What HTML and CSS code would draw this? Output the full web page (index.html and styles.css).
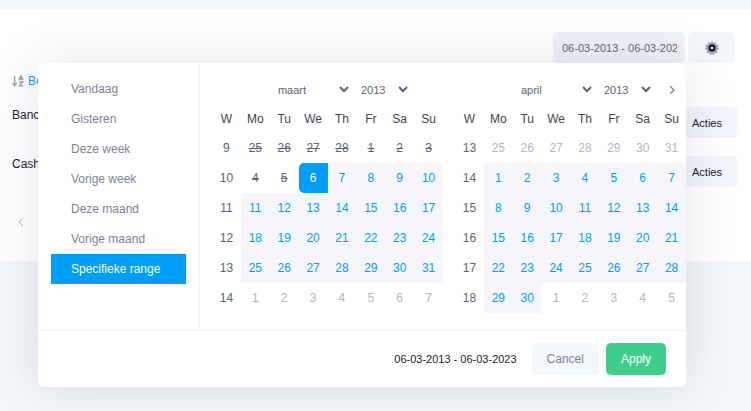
FILE: index.html
```html
<!DOCTYPE html>
<html lang="nl">
<head>
    <meta charset="UTF-8">
    <meta name="viewport" content="width=device-width, initial-scale=1.0">
    <title>Betaald</title>
    <link rel="stylesheet" href="styles.css">
</head>
<body>
    <main class="card">
        <div class="toolbar">
            <input class="range-input" type="text" aria-label="Periode" value="06-03-2013 - 06-03-2023">
            <button class="settings" type="button" aria-label="Instellingen">
                <svg width="16" height="16" viewBox="0 0 16 16">
                    <path fill="#a9adbf" d="M8 0.8l1.6 1.9 2.4-.8.4 2.5 2.4.6-.9 2.3 1.3 1.7-2 1.4.3 2.4-2.5.2-1 2.2L8 14l-2 1.2-1-2.2-2.5-.2.3-2.4-2-1.4 1.3-1.7-.9-2.3 2.4-.6.4-2.5 2.4.8z"/>
                    <circle cx="8" cy="8" r="2.5" fill="#fff" stroke="#181c32" stroke-width="2.4"/>
                </svg>
            </button>
        </div>
        <table class="list">
            <thead>
                <tr>
                    <th>
                        <a class="sort" href="#">
                            <svg width="12" height="12" viewBox="0 0 12 12" fill="none" stroke="#9a9db4" stroke-width="1.3">
                                <path d="M2.7 1v9.5M.5 8l2.2 2.7L5 8M6.8 5.3L9 .8l2.2 4.5M7.5 4h3M7 7h3.8l-3.6 3.8h4"/>
                            </svg>
                            Betaald
                        </a>
                    </th>
                    <th></th>
                </tr>
            </thead>
            <tbody>
                <tr>
                    <td>Bancontact</td>
                    <td class="actions"><button type="button">Acties</button></td>
                </tr>
                <tr>
                    <td>Cash</td>
                    <td class="actions"><button type="button">Acties</button></td>
                </tr>
            </tbody>
        </table>
        <div class="pager">
            <a href="#" aria-label="Vorige">
                <svg width="8" height="10" viewBox="0 0 8 10" fill="none" stroke="#b5b5c3"><path d="M6 1L2 5l4 4"/></svg>
            </a>
        </div>
    </main>

    <div class="picker">
        <div class="picker-main">
            <div class="ranges">
                <button type="button">Vandaag</button>
                <button type="button">Gisteren</button>
                <button type="button">Deze week</button>
                <button type="button">Vorige week</button>
                <button type="button">Deze maand</button>
                <button type="button">Vorige maand</button>
                <button type="button" class="active">Specifieke range</button>
            </div>
            <div class="calendars">
                <table class="calendar">
                    <thead>
                        <tr>
                            <th></th>
                            <th></th>
                            <th colspan="5">
                                <div class="selects">
                                    <select class="month" aria-label="Maand"><option>maart</option></select>
                                    <select class="year" aria-label="Jaar"><option>2013</option></select>
                                </div>
                            </th>
                            <th></th>
                        </tr>
                        <tr><th>W</th><th>Mo</th><th>Tu</th><th>We</th><th>Th</th><th>Fr</th><th>Sa</th><th>Su</th></tr>
                    </thead>
                    <tbody>
                        <tr><td>9</td><td class="disabled">25</td><td class="disabled">26</td><td class="disabled">27</td><td class="disabled">28</td><td class="disabled">1</td><td class="disabled">2</td><td class="disabled">3</td></tr>
                        <tr><td>10</td><td class="disabled">4</td><td class="disabled">5</td><td class="start">6</td><td class="in">7</td><td class="in">8</td><td class="in">9</td><td class="in">10</td></tr>
                        <tr><td>11</td><td class="in">11</td><td class="in">12</td><td class="in">13</td><td class="in">14</td><td class="in">15</td><td class="in">16</td><td class="in">17</td></tr>
                        <tr><td>12</td><td class="in">18</td><td class="in">19</td><td class="in">20</td><td class="in">21</td><td class="in">22</td><td class="in">23</td><td class="in">24</td></tr>
                        <tr><td>13</td><td class="in">25</td><td class="in">26</td><td class="in">27</td><td class="in">28</td><td class="in">29</td><td class="in">30</td><td class="in">31</td></tr>
                        <tr><td>14</td><td class="off">1</td><td class="off">2</td><td class="off">3</td><td class="off">4</td><td class="off">5</td><td class="off">6</td><td class="off">7</td></tr>
                    </tbody>
                </table>
                <table class="calendar">
                    <thead>
                        <tr>
                            <th></th>
                            <th></th>
                            <th colspan="5">
                                <div class="selects">
                                    <select class="month" aria-label="Maand"><option>april</option></select>
                                    <select class="year" aria-label="Jaar"><option>2013</option></select>
                                </div>
                            </th>
                            <th>
                                <button class="next" type="button" aria-label="Volgende">
                                    <svg width="8" height="10" viewBox="0 0 8 10" fill="none" stroke="#7e8299" stroke-width="1.2"><path d="M2 1l4 4-4 4"/></svg>
                                </button>
                            </th>
                        </tr>
                        <tr><th>W</th><th>Mo</th><th>Tu</th><th>We</th><th>Th</th><th>Fr</th><th>Sa</th><th>Su</th></tr>
                    </thead>
                    <tbody>
                        <tr><td>13</td><td class="off">25</td><td class="off">26</td><td class="off">27</td><td class="off">28</td><td class="off">29</td><td class="off">30</td><td class="off">31</td></tr>
                        <tr><td>14</td><td class="in">1</td><td class="in">2</td><td class="in">3</td><td class="in">4</td><td class="in">5</td><td class="in">6</td><td class="in">7</td></tr>
                        <tr><td>15</td><td class="in">8</td><td class="in">9</td><td class="in">10</td><td class="in">11</td><td class="in">12</td><td class="in">13</td><td class="in">14</td></tr>
                        <tr><td>16</td><td class="in">15</td><td class="in">16</td><td class="in">17</td><td class="in">18</td><td class="in">19</td><td class="in">20</td><td class="in">21</td></tr>
                        <tr><td>17</td><td class="in">22</td><td class="in">23</td><td class="in">24</td><td class="in">25</td><td class="in">26</td><td class="in">27</td><td class="in">28</td></tr>
                        <tr><td>18</td><td class="in">29</td><td class="in">30</td><td class="off">1</td><td class="off">2</td><td class="off">3</td><td class="off">4</td><td class="off">5</td></tr>
                    </tbody>
                </table>
            </div>
        </div>
        <div class="picker-footer">
            <span class="selected">06-03-2013 - 06-03-2023</span>
            <button class="cancel" type="button">Cancel</button>
            <button class="apply" type="button">Apply</button>
        </div>
    </div>
</body>
</html>
```

FILE: styles.css
```css
* {
    box-sizing: border-box;
}
body {
    margin: 0;
    padding-top: 9px;
    min-height: 100vh;
    background: #f2f7fa;
    color: #181c32;
    font-family: Helvetica, "Liberation Sans", Arial, sans-serif;
    font-size: 12px;
    line-height: 16px;
}
button, input, select {
    font: inherit;
    border: none;
    margin: 0;
}
button {
    cursor: pointer;
}
a {
    color: #009ef7;
    text-decoration: none;
}
svg {
    display: block;
}

/* Page behind the picker */
.card {
    background: #fff;
    padding: 23px 13px 0 12px;
}
.toolbar {
    display: flex;
    justify-content: flex-end;
    gap: 3px;
    padding-right: 3px;
}
.range-input {
    width: 132px;
    height: 31px;
    padding: 0 8px 0 9px;
    border-radius: 5px;
    background: #eef2f7;
    color: #5e6278;
    font-size: 11px;
}
.settings {
    display: flex;
    align-items: center;
    justify-content: center;
    width: 47px;
    height: 31px;
    border-radius: 5px;
    background: #f2f6fa;
}
.list {
    width: 100%;
    border-collapse: collapse;
}
.list th {
    height: 35px;
    padding: 0;
    font-weight: normal;
    text-align: left;
}
.list td {
    padding: 9px 0;
    vertical-align: top;
}
.sort {
    display: flex;
    align-items: center;
    gap: 4px;
}
.actions {
    text-align: right;
}
.actions button {
    display: block;
    margin-left: auto;
    width: 74px;
    height: 31px;
    padding: 0 16px 0 0;
    border-radius: 5px;
    background: #f2f6fa;
    color: #181c32;
    font-size: 11px;
    text-align: right;
}
.pager {
    height: 65px;
    padding: 21px 5px;
}

/* Date range picker */
.picker {
    position: absolute;
    top: 63px;
    left: 38px;
    right: 65px;
    border-radius: 5px;
    background: #fff;
    box-shadow: 0 0 50px rgba(82, 63, 105, 0.15);
}
.picker-main {
    display: flex;
    border-bottom: 1px solid #eff2f5;
}
.ranges {
    display: flex;
    flex-direction: column;
    width: 162px;
    padding: 11px 13px 46px;
    border-right: 1px solid #eff2f5;
}
.ranges button {
    height: 30px;
    padding: 0 20px;
    background: none;
    color: #7e8299;
    text-align: left;
    white-space: nowrap;
}
.ranges .active {
    background: #009ef7;
    color: #fff;
}
.calendars {
    display: grid;
    flex: 1;
    grid-template-columns: 1fr 1fr;
    align-items: start;
    gap: 12px;
    padding: 12px 0 0 12px;
}
.calendar {
    width: 100%;
    height: 238px;
    table-layout: fixed;
    border-collapse: collapse;
    text-align: center;
    color: #5e6278;
}
.calendar th,
.calendar td {
    height: 29px;
    padding: 0;
}
.calendar th {
    color: #3f4254;
    font-weight: normal;
}
.calendar .disabled {
    text-decoration: line-through;
}
.calendar .off {
    color: #b5b5c3;
}
.calendar .in {
    background: #f4f6fa;
    color: #009ef7;
}
.calendar .start {
    border-radius: 5px 0 0 5px;
    background: #009ef7;
    color: #fff;
}
.selects {
    display: flex;
    justify-content: center;
    gap: 6px;
}
.selects select {
    appearance: none;
    height: 20px;
    padding: 0 4px;
    background: url("data:image/svg+xml,%3Csvg xmlns='http://www.w3.org/2000/svg' width='10' height='7' fill='none' stroke='%235e6278' stroke-width='2'%3E%3Cpath d='M1 1l4 4 4-4'/%3E%3C/svg%3E") no-repeat right 2px center;
    color: #5e6278;
    font-size: 11px;
}
.month {
    width: 77px;
}
.year {
    width: 53px;
}
.next {
    padding: 4px;
    background: none;
}
.next svg {
    margin: 0 auto;
}
.picker-footer {
    display: flex;
    align-items: center;
    justify-content: flex-end;
    gap: 7px;
    padding: 12px 20px;
}
.selected {
    margin-right: 8px;
    font-size: 11px;
}
.cancel,
.apply {
    height: 32px;
    padding: 0 15px;
    border-radius: 5px;
}
.cancel {
    background: #f5f8fa;
    color: #7e8299;
}
.apply {
    background: #3fcd8e;
    color: #fff;
}
```
